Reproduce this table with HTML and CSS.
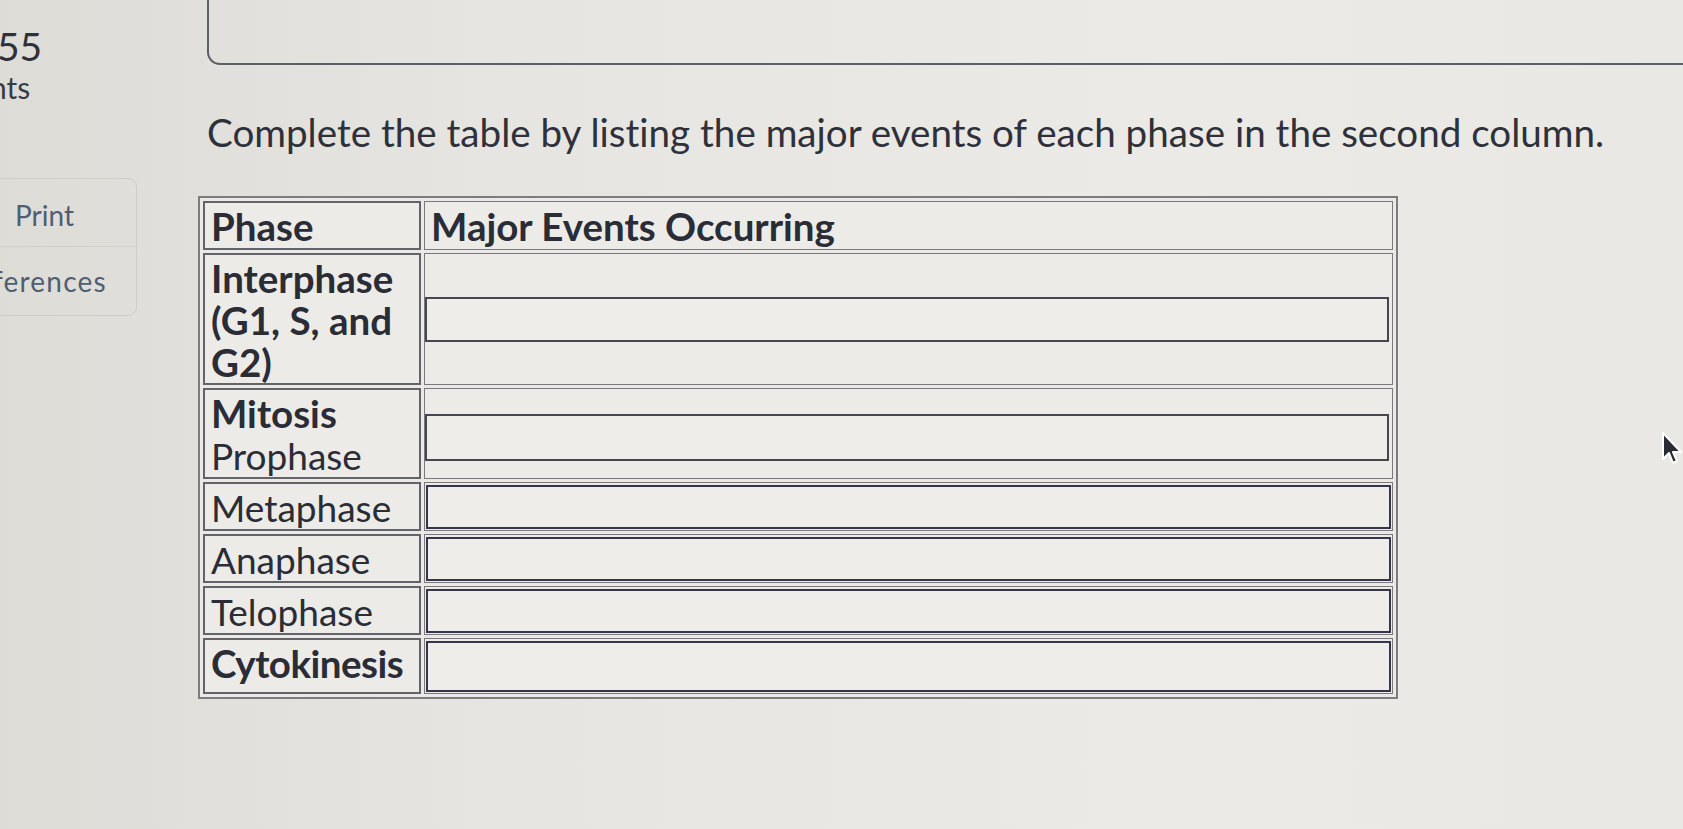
FILE: index.html
```html
<!DOCTYPE html>
<html lang="en">
<head>
<meta charset="utf-8">
<title>Cell cycle table</title>
<link rel="stylesheet" href="styles.css">
</head>
<body>
<div class="page">
  <aside class="side">
    <div class="score">55</div>
    <div class="points">nts</div>
    <nav class="tools">
      <div class="tool print">Print</div>
      <div class="tool refs">ferences</div>
    </nav>
  </aside>
  <main class="main">
    <div class="topbox"></div>
    <p class="prompt">Complete the table by listing the major events of each phase in the second column.</p>
    <table class="grid">
      <tr class="r-head">
        <td class="c1"><b>Phase</b></td>
        <td class="c2 head"><b>Major Events Occurring</b></td>
      </tr>
      <tr class="r-inter">
        <td class="c1"><b>Interphase (G1, S, and G2)</b></td>
        <td class="c2"><div class="field soft"></div></td>
      </tr>
      <tr class="r-mit">
        <td class="c1"><b>Mitosis</b><br><span class="reg">Prophase</span></td>
        <td class="c2"><div class="field soft tall"></div></td>
      </tr>
      <tr class="r-one">
        <td class="c1"><span class="reg">Metaphase</span></td>
        <td class="c2 fill"><div class="field"></div></td>
      </tr>
      <tr class="r-one">
        <td class="c1"><span class="reg">Anaphase</span></td>
        <td class="c2 fill"><div class="field"></div></td>
      </tr>
      <tr class="r-one">
        <td class="c1"><span class="reg">Telophase</span></td>
        <td class="c2 fill"><div class="field"></div></td>
      </tr>
      <tr class="r-last">
        <td class="c1"><b class="tight">Cytokinesis</b></td>
        <td class="c2 fill"><div class="field big"></div></td>
      </tr>
    </table>
  </main>
  <svg class="cursor" width="24" height="36" viewBox="0 0 24 36" aria-hidden="true">
    <path d="M2 2 L2 28 L8 22 L12 32 L16 30 L12 21 L20 21 Z" fill="#2a2c35" stroke="#ffffff" stroke-width="2" stroke-linejoin="round"/>
  </svg>
</div>
</body>
</html>
```

FILE: styles.css
```css
* { box-sizing: border-box; }

html, body {
  margin: 0;
  padding: 0;
  width: 1683px;
  height: 829px;
  overflow: hidden;
}

body {
  background: linear-gradient(90deg, #dedcd7 0%, #e6e5e1 30%, #ebeae6 70%, #e9e8e4 100%);
  font-family: Lato, "Open Sans", sans-serif;
  font-variant-ligatures: none;
  color: #2c2e37;
}

.page {
  position: relative;
  display: grid;
  grid-template-columns: 198px 1fr;
  height: 829px;
}

.side {
  display: flex;
  flex-direction: column;
  overflow: hidden;
}

.score {
  margin-top: 25px;
  margin-left: -3px;
  font-size: 39px;
  line-height: 42px;
  color: #2f3138;
}

.points {
  margin-top: 3px;
  margin-left: -10px;
  font-size: 30px;
  line-height: 34px;
  color: #3a3c44;
}

.tools {
  margin-top: 74px;
  width: 147px;
  margin-left: -10px;
  border: 1.5px solid #cfcdc8;
  border-radius: 9px;
  display: flex;
  flex-direction: column;
}

.tool {
  height: 68px;
  display: flex;
  align-items: center;
  font-size: 28px;
  color: #4e5e74;
}

.tool.print {
  padding-left: 24px;
  padding-top: 4px;
  border-bottom: 1.5px solid #d2d0cb;
}

.tool.refs {
  margin-left: 2px;
  letter-spacing: 1.2px;
}

.main {
  min-width: 0;
}

.topbox {
  margin-left: 9px;
  height: 65px;
  border-left: 2px solid #5d5e66;
  border-bottom: 2px solid #5d5e66;
  border-bottom-left-radius: 13px;
}

.prompt {
  margin: 44px 0 0 9px;
  font-size: 38.6px;
  line-height: 46px;
  color: #2f313a;
  white-space: nowrap;
}

.grid {
  margin-top: 41px;
  width: 1200px;
  border-collapse: separate;
  border-spacing: 3px;
  border: 2px solid #7d7d80;
  font-size: 38.5px;
  line-height: 42px;
  color: #2a2c36;
  background: #eae9e5;
}

.grid td {
  padding: 0;
  background: #ecebe8;
}

.reg {
  font-size: 37px;
}

.tight {
  letter-spacing: -0.5px;
}

.c1 {
  width: 218px;
  border: 2px solid #63646b;
  padding: 2px 2px 0 6px !important;
  vertical-align: top;
  white-space: nowrap;
}

.c2 {
  border: 1.5px solid #7a7a7e;
  vertical-align: middle;
}

.c2.head {
  padding-left: 6px !important;
}

.c2.fill {
  padding: 1px !important;
}

.r-head { height: 49px; }
.r-inter { height: 130px; }
.r-mit { height: 87px; }
.r-one { height: 49px; }
.r-last { height: 56px; }

.r-inter .c1 b {
  display: block;
  white-space: normal;
}

.field {
  height: 44px;
  border: 2.5px solid #37354a;
  background: #eeede9;
}

.field.big { height: 51px; }

.field.soft {
  height: 45px;
  border: 2px solid #47464f;
  margin-right: 3px;
}

.field.tall {
  height: 47px;
  margin-top: 8px;
}

.cursor {
  position: absolute;
  left: 1661px;
  top: 431px;
}
```
